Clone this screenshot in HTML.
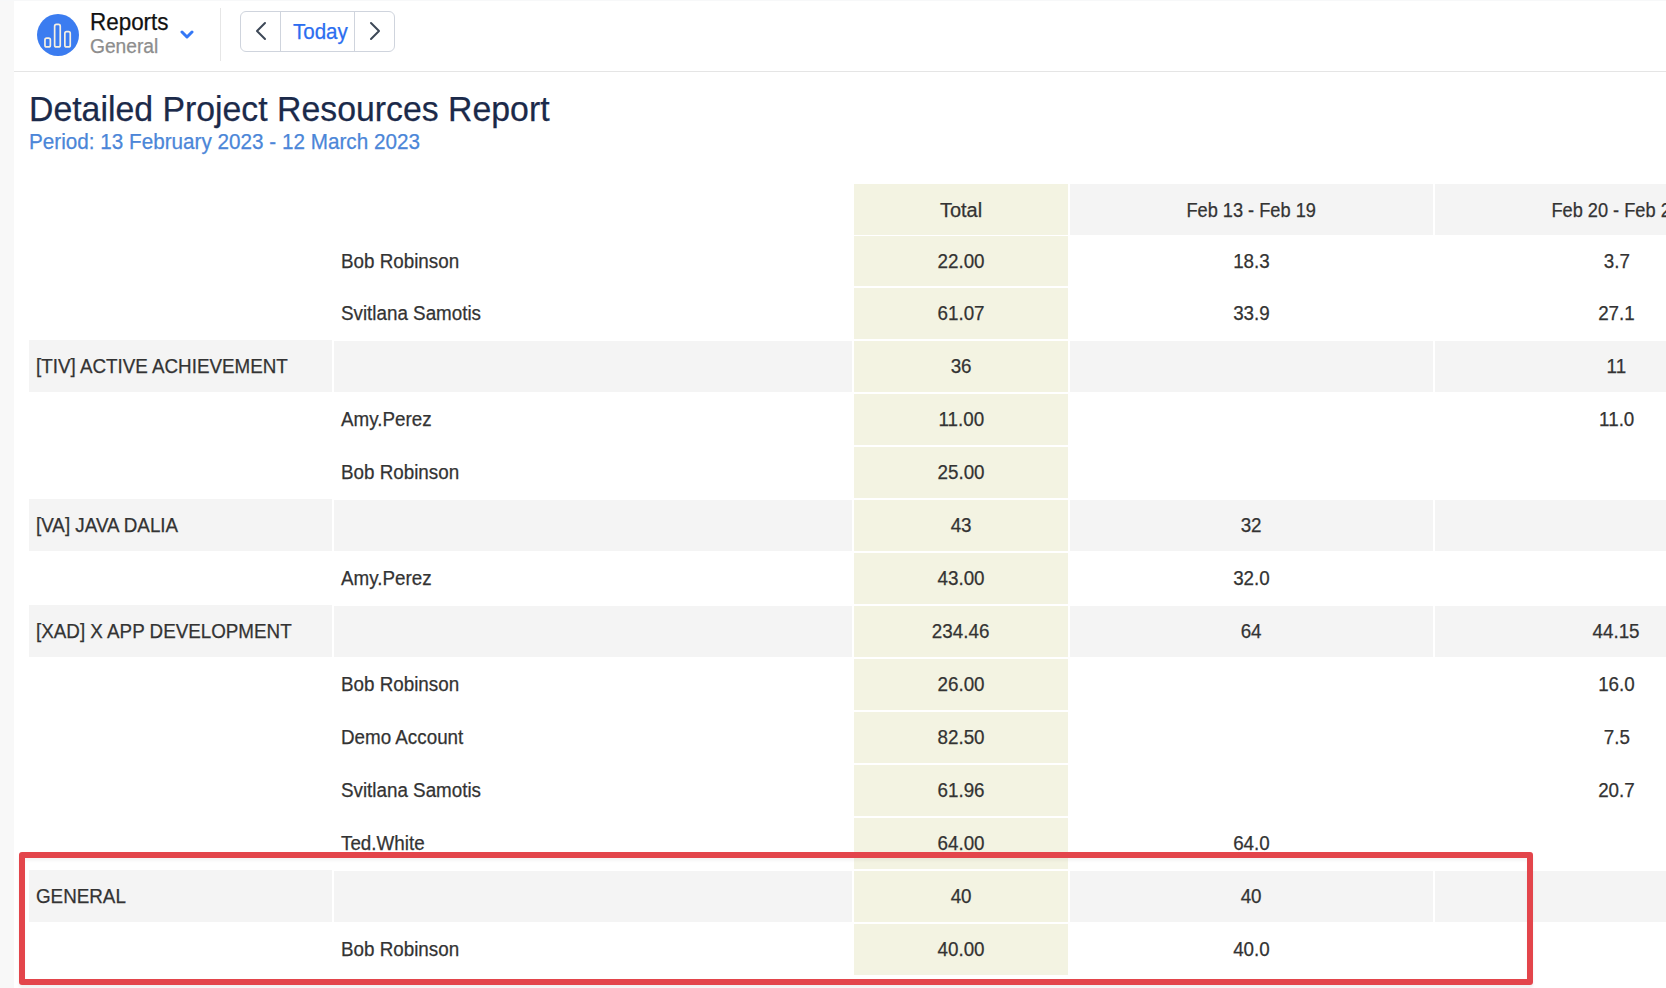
<!DOCTYPE html>
<html>
<head>
<meta charset="utf-8">
<style>
html,body{margin:0;padding:0;}
body{width:1666px;height:988px;overflow:hidden;position:relative;background:#fff;font-family:"Liberation Sans",sans-serif;color:#333;}
.abs{position:absolute;}
#strip{left:0;top:0;width:14px;height:988px;background:#f8f8f8;}
#topline{left:0;top:0;width:1666px;height:1px;background:#f7f8f9;}
#hline{left:14px;top:71px;width:1652px;height:1px;background:#e5e5e5;}
#sep{left:220px;top:8px;width:1px;height:53px;background:#e6e6e6;}
.t{position:absolute;white-space:nowrap;line-height:1;transform-origin:0 50%;-webkit-text-stroke-width:0.25px;}
#reports{left:90.3px;top:10.5px;font-size:23px;color:#111;transform:scaleX(0.975);}
#general{left:89.6px;top:36.8px;font-size:19.6px;color:#8d8d8d;transform:scaleX(0.98);}
#btns{left:240px;top:11px;width:153px;height:39px;border:1px solid #cfd4dd;border-radius:6px;}
#d1{left:280px;top:12px;width:1px;height:39px;background:#cfd4dd;}
#d2{left:354px;top:12px;width:1px;height:39px;background:#cfd4dd;}
#today{left:293px;top:22.3px;font-size:21.5px;color:#2c6ef0;transform:scaleX(0.955);}
#title{left:29.3px;top:90.8px;font-size:35px;color:#1b2a4a;transform:scaleX(0.966);}
#period{left:29.2px;top:132.2px;font-size:21.5px;color:#4b86d8;transform:scaleX(0.962);}
.row{position:absolute;left:0;width:1666px;}
.c{position:absolute;top:0;height:100%;font-size:20px;white-space:nowrap;overflow:hidden;}
.s{display:inline-block;transform:scaleX(0.94);-webkit-text-stroke-width:0.25px;}
.c1{left:29px;width:296px;padding-left:7px;}
.c2{left:334px;width:511px;padding-left:7px;}
.c1 .s,.c2 .s{transform-origin:0 50%;}
.c3{left:854px;width:214px;text-align:center;background:#f3f3e2;}
.c4{left:1070px;width:363px;text-align:center;}
.c5{left:1435px;width:363px;text-align:center;}
.g .c1,.g .c2,.g .c4,.g .c5{background:#f4f4f4;}
.g .c1{top:-1px;height:52px;line-height:53px;}
.hd .c4,.hd .c5{background:#f4f4f4;}
.hd .c{line-height:53px;}
.hd .c4 .s,.hd .c5 .s{transform:scaleX(0.91);}
.hd .c3 .s{transform:scaleX(1.0);}
#red{left:19px;top:852px;width:1502px;height:121px;border:6px solid #e3454b;border-radius:3px;box-shadow:0 3px 3px rgba(0,0,0,0.06), inset 0 3px 3px rgba(0,0,0,0.04);}
</style>
</head>
<body>
<div class="abs" id="strip"></div>
<div class="abs" id="topline"></div>
<div class="abs" id="hline"></div>
<div class="abs" id="sep"></div>

<svg class="abs" style="left:37px;top:14px" width="42" height="42" viewBox="0 0 42 42">
  <circle cx="21" cy="21" r="21" fill="#3b7cf0"/>
  <g fill="none" stroke="#f6f0e2" stroke-width="1.7">
    <rect x="7.95" y="24.05" width="5.4" height="8.9" rx="1.8"/>
    <rect x="17.65" y="10.35" width="5.6" height="22.6" rx="1.8"/>
    <rect x="27.85" y="17.65" width="5.4" height="15.3" rx="1.8"/>
  </g>
</svg>
<div class="t" id="reports">Reports</div>
<div class="t" id="general">General</div>
<svg class="abs" style="left:180px;top:29.4px" width="14" height="11" viewBox="0 0 14 11">
  <path d="M2 3 L7 8 L12 3" fill="none" stroke="#3478f6" stroke-width="3" stroke-linecap="round" stroke-linejoin="round"/>
</svg>

<div class="abs" id="btns"></div>
<div class="abs" id="d1"></div>
<div class="abs" id="d2"></div>
<svg class="abs" style="left:254px;top:21px" width="14" height="20" viewBox="0 0 14 20">
  <path d="M11 2 L3 10 L11 18" fill="none" stroke="#3d4857" stroke-width="2" stroke-linecap="round" stroke-linejoin="round"/>
</svg>
<div class="t" id="today">Today</div>
<svg class="abs" style="left:368px;top:21px" width="14" height="20" viewBox="0 0 14 20">
  <path d="M3 2 L11 10 L3 18" fill="none" stroke="#3d4857" stroke-width="2" stroke-linecap="round" stroke-linejoin="round"/>
</svg>

<div class="t" id="title">Detailed Project Resources Report</div>
<div class="t" id="period">Period: 13 February 2023 - 12 March 2023</div>

<div id="table">
<div class="row hd" style="top:184px;height:51px;line-height:51px"><div class="c c1"></div><div class="c c2"></div><div class="c c3"><span class="s">Total</span></div><div class="c c4"><span class="s">Feb 13 - Feb 19</span></div><div class="c c5"><span class="s">Feb 20 - Feb 26</span></div></div>
<div class="row " style="top:236px;height:50px;line-height:50px"><div class="c c1"></div><div class="c c2"><span class="s">Bob Robinson</span></div><div class="c c3"><span class="s">22.00</span></div><div class="c c4"><span class="s">18.3</span></div><div class="c c5"><span class="s">3.7</span></div></div>
<div class="row " style="top:288px;height:51px;line-height:51px"><div class="c c1"></div><div class="c c2"><span class="s">Svitlana Samotis</span></div><div class="c c3"><span class="s">61.07</span></div><div class="c c4"><span class="s">33.9</span></div><div class="c c5"><span class="s">27.1</span></div></div>
<div class="row g" style="top:341px;height:51px;line-height:51px"><div class="c c1"><span class="s">[TIV] ACTIVE ACHIEVEMENT</span></div><div class="c c2"></div><div class="c c3"><span class="s">36</span></div><div class="c c4"></div><div class="c c5"><span class="s">11</span></div></div>
<div class="row " style="top:394px;height:51px;line-height:51px"><div class="c c1"></div><div class="c c2"><span class="s">Amy.Perez</span></div><div class="c c3"><span class="s">11.00</span></div><div class="c c4"></div><div class="c c5"><span class="s">11.0</span></div></div>
<div class="row " style="top:447px;height:51px;line-height:51px"><div class="c c1"></div><div class="c c2"><span class="s">Bob Robinson</span></div><div class="c c3"><span class="s">25.00</span></div><div class="c c4"></div><div class="c c5"></div></div>
<div class="row g" style="top:500px;height:51px;line-height:51px"><div class="c c1"><span class="s">[VA] JAVA DALIA</span></div><div class="c c2"></div><div class="c c3"><span class="s">43</span></div><div class="c c4"><span class="s">32</span></div><div class="c c5"></div></div>
<div class="row " style="top:553px;height:51px;line-height:51px"><div class="c c1"></div><div class="c c2"><span class="s">Amy.Perez</span></div><div class="c c3"><span class="s">43.00</span></div><div class="c c4"><span class="s">32.0</span></div><div class="c c5"></div></div>
<div class="row g" style="top:606px;height:51px;line-height:51px"><div class="c c1"><span class="s">[XAD] X APP DEVELOPMENT</span></div><div class="c c2"></div><div class="c c3"><span class="s">234.46</span></div><div class="c c4"><span class="s">64</span></div><div class="c c5"><span class="s">44.15</span></div></div>
<div class="row " style="top:659px;height:51px;line-height:51px"><div class="c c1"></div><div class="c c2"><span class="s">Bob Robinson</span></div><div class="c c3"><span class="s">26.00</span></div><div class="c c4"></div><div class="c c5"><span class="s">16.0</span></div></div>
<div class="row " style="top:712px;height:51px;line-height:51px"><div class="c c1"></div><div class="c c2"><span class="s">Demo Account</span></div><div class="c c3"><span class="s">82.50</span></div><div class="c c4"></div><div class="c c5"><span class="s">7.5</span></div></div>
<div class="row " style="top:765px;height:51px;line-height:51px"><div class="c c1"></div><div class="c c2"><span class="s">Svitlana Samotis</span></div><div class="c c3"><span class="s">61.96</span></div><div class="c c4"></div><div class="c c5"><span class="s">20.7</span></div></div>
<div class="row " style="top:818px;height:51px;line-height:51px"><div class="c c1"></div><div class="c c2"><span class="s">Ted.White</span></div><div class="c c3"><span class="s">64.00</span></div><div class="c c4"><span class="s">64.0</span></div><div class="c c5"></div></div>
<div class="row g" style="top:871px;height:51px;line-height:51px"><div class="c c1"><span class="s">GENERAL</span></div><div class="c c2"></div><div class="c c3"><span class="s">40</span></div><div class="c c4"><span class="s">40</span></div><div class="c c5"></div></div>
<div class="row " style="top:924px;height:51px;line-height:51px"><div class="c c1"></div><div class="c c2"><span class="s">Bob Robinson</span></div><div class="c c3"><span class="s">40.00</span></div><div class="c c4"><span class="s">40.0</span></div><div class="c c5"></div></div>
</div>

<div class="abs" id="red"></div>
</body>
</html>
